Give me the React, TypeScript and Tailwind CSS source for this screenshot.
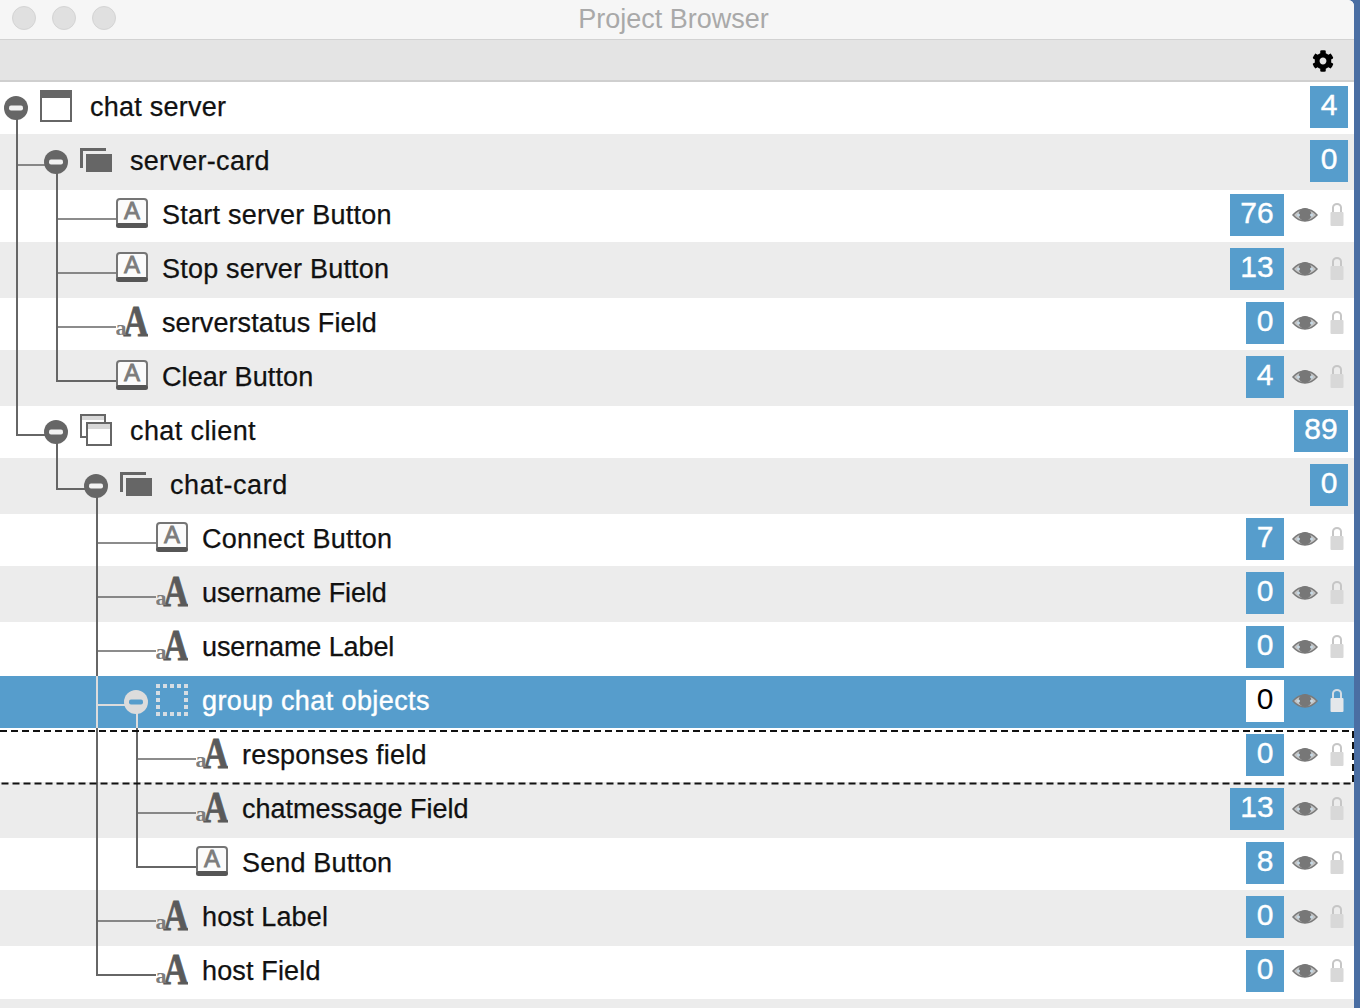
import { FaCog } from "react-icons/fa";

const GRAY = "#666666";

function WindowIcon() {
  return (
    <svg width="32" height="32" viewBox="0 0 32 32">
      <rect x="1" y="1" width="30" height="30" fill="#fff" stroke={GRAY} strokeWidth="2" />
      <rect x="0" y="0" width="32" height="8" fill={GRAY} />
    </svg>
  );
}

function CardIcon() {
  return (
    <svg width="32" height="24" viewBox="0 0 32 24">
      <path d="M0 0H26V3H3V20H0Z" fill={GRAY} />
      <rect x="6" y="6" width="26" height="18" fill={GRAY} />
    </svg>
  );
}

function StackIcon() {
  return (
    <svg width="32" height="32" viewBox="0 0 32 32">
      <rect x="1" y="1" width="24" height="22" fill="#fff" stroke={GRAY} strokeWidth="2" />
      <rect x="2" y="2" width="22" height="4" fill="#d8d8d8" />
      <rect x="7" y="9" width="24" height="22" fill="#fff" stroke={GRAY} strokeWidth="2" />
      <rect x="8" y="10" width="22" height="5" fill="#d8d8d8" />
    </svg>
  );
}

function ButtonIcon() {
  return (
    <svg width="32" height="30" viewBox="0 0 32 30">
      <rect x="1" y="1" width="30" height="27" rx="3" fill="#fbfbfb" stroke="#757575" strokeWidth="2" />
      <rect x="0" y="25" width="32" height="5" rx="2.500" fill="#565656" />
      <text
        x="16"
        y="21"
        textAnchor="middle"
        fontFamily="Liberation Sans, sans-serif"
        fontSize="24"
        fill="#7c7c7c"
        stroke="#7c7c7c"
        strokeWidth="0.800"
      >
        A
      </text>
    </svg>
  );
}

function FieldIcon() {
  return (
    <svg width="32" height="58" viewBox="0 -14 32 58">
      <text
        transform="translate(20 30) scale(0.8 1)"
        textAnchor="middle"
        fontFamily="Liberation Serif, serif"
        fontWeight="700"
        fontSize="44"
        fill="#5a5a5a"
        stroke="#5a5a5a"
        strokeWidth="0.800"
      >
        A
      </text>
      <text x="5" y="29" textAnchor="middle" fontFamily="Liberation Serif, serif" fontWeight="700" fontSize="22" fill="#7d7d7d">
        a
      </text>
    </svg>
  );
}

function GroupIcon() {
  const steps = [0, 7, 14, 21, 28];
  return (
    <svg width="32" height="32" viewBox="0 0 32 32" fill="#d6dde3">
      {steps.map((p) => (
        <g key={p}>
          <rect x={p} y={0} width="4" height="4" />
          <rect x={p} y={28} width="4" height="4" />
          <rect x={0} y={p} width="4" height="4" />
          <rect x={28} y={p} width="4" height="4" />
        </g>
      ))}
    </svg>
  );
}

function Eye() {
  return (
    <svg width="26" height="14" viewBox="0 0 26 14">
      <path d="M1 7C5 2.500 9 1 13 1s8 1.500 12 6c-4 4.500-8 6-12 6S5 11.500 1 7Z" fill="#c4c4c4" stroke="#7a7a7a" strokeWidth="1.500" />
      <circle cx="13" cy="6.500" r="6.500" fill="#777" />
      <circle cx="6.500" cy="7" r="1.500" fill="#c6d8e4" />
      <circle cx="19.500" cy="7" r="1.500" fill="#c6d8e4" />
    </svg>
  );
}

function Lock({ selected }: { selected: boolean }) {
  return (
    <svg width="14" height="23" viewBox="0 0 14 23">
      <path d="M3 10V4.500a4 3.500 0 0 1 8 0V10" fill="none" stroke={selected ? "#d5dde4" : "#c6c6c6"} strokeWidth="2" />
      <rect x="0.500" y="9" width="13" height="14" rx="1" fill={selected ? "#e4e7ea" : "#d8d8d8"} />
    </svg>
  );
}

type Kind = "window" | "card" | "stack" | "button" | "field" | "group";

const ICONS: Record<Kind, () => React.ReactElement> = {
  window: WindowIcon,
  card: CardIcon,
  stack: StackIcon,
  button: ButtonIcon,
  field: FieldIcon,
  group: GroupIcon,
};

type Row = { label: string; kind: Kind; depth: number; count: number; track: number; tools?: boolean; selected?: boolean };

const ROWS: Row[] = [
  { label: "chat server", kind: "window", depth: 0, count: 4, track: 0.25 },
  { label: "server-card", kind: "card", depth: 1, count: 0, track: 0.3 },
  { label: "Start server Button", kind: "button", depth: 2, count: 76, track: 0.25, tools: true },
  { label: "Stop server Button", kind: "button", depth: 2, count: 13, track: 0.2, tools: true },
  { label: "serverstatus Field", kind: "field", depth: 2, count: 0, track: 0.1, tools: true },
  { label: "Clear Button", kind: "button", depth: 2, count: 4, track: 0.1, tools: true },
  { label: "chat client", kind: "stack", depth: 1, count: 89, track: 0.4, tools: false },
  { label: "chat-card", kind: "card", depth: 3, count: 0, track: 0.6 },
  { label: "Connect Button", kind: "button", depth: 4, count: 7, track: 0.3, tools: true },
  { label: "username Field", kind: "field", depth: 4, count: 0, track: -0.1, tools: true },
  { label: "username Label", kind: "field", depth: 4, count: 0, track: -0.1, tools: true },
  { label: "group chat objects", kind: "group", depth: 5, count: 0, track: 0.4, tools: true, selected: true },
  { label: "responses field", kind: "field", depth: 6, count: 0, track: 0.2, tools: true },
  { label: "chatmessage Field", kind: "field", depth: 6, count: 13, track: 0, tools: true },
  { label: "Send Button", kind: "button", depth: 6, count: 8, track: 0.15, tools: true },
  { label: "host Label", kind: "field", depth: 4, count: 0, track: 0.15, tools: true },
  { label: "host Field", kind: "field", depth: 4, count: 0, track: 0.15, tools: true },
];

const ICON_LEFT = [40, 80, 116, 120, 156, 156, 196];
const TEXT_LEFT = [90, 130, 162, 170, 202, 202, 242];

function TreeRow({ row, index }: { row: Row; index: number }) {
  const Icon = ICONS[row.kind];
  const shape = row.selected
    ? "h-[54px] border-y border-y-white bg-[#569dcc] bg-clip-padding"
    : index % 2 === 0
      ? "h-[54px] bg-white"
      : "z-[1] -my-px h-[56px] bg-[#ececec]";
  const lifted = row.kind === "button" || row.kind === "field";
  return (
    <div className={`relative flex items-center ${shape}`}>
      <div
        className={`absolute top-1/2 flex h-[32px] w-[32px] items-center ${lifted ? "-translate-y-[19px]" : "-translate-y-[18px]"}`}
        style={{ left: ICON_LEFT[row.depth] }}
      >
        <Icon />
      </div>
      <span
        className={`relative top-[-1px] text-[27px] leading-none ${
          row.selected
            ? "text-white [-webkit-text-stroke:0.4px_#ffffff]"
            : "text-[#111111] [-webkit-text-stroke:0.25px_#111111]"
        }`}
        style={{ marginLeft: TEXT_LEFT[row.depth], letterSpacing: row.track }}
      >
        {row.label}
      </span>
      <div className="mb-[2px] ml-auto flex items-center pr-[6px]">
        <span
          className={`flex h-[42px] items-center justify-center pb-[5px] text-[30px] leading-none ${
            row.count > 9 ? "w-[54px]" : "w-[38px]"
          } ${
            row.selected
              ? "bg-white text-black"
              : "bg-[#569dcc] text-white [-webkit-text-stroke:0.4px_#ffffff]"
          }`}
        >
          {row.count}
        </span>
        {row.tools && (
          <div className="flex w-[64px] items-center gap-[12px] pl-[8px]">
            <Eye />
            <div className="-mt-[2px]">
              <Lock selected={!!row.selected} />
            </div>
          </div>
        )}
      </div>
    </div>
  );
}

function Minus({ x, y, selected }: { x: number; y: number; selected?: boolean }) {
  return (
    <g>
      <circle cx={x} cy={y} r="12" fill={selected ? "#dcdcdc" : GRAY} />
      <rect x={x - 7} y={y - 2.500} width="14" height="5" rx="2" fill={selected ? "#569dcc" : "#f2f2f2"} />
    </g>
  );
}

function TreeLines() {
  const verticals = [
    "M17 108V435H45",
    "M57 162V381H116",
    "M57 432V489H85",
    "M97 486V676",
    "M97 728V975H156",
    "M137 728V867H196",
  ];
  const branches = [165, 219, 273, 327].map((y, i) => `M${i === 0 ? 17 : 57} ${y}H${i === 0 ? 45 : 116}`);
  const low = [543, 597, 651, 921].map((y) => `M97 ${y}H156`);
  const inner = [759, 813].map((y) => `M137 ${y}H196`);
  return (
    <svg className="pointer-events-none absolute inset-0 z-[2]" width="1354" height="927" viewBox="0 81 1354 927">
      {verticals.map((d) => (
        <path key={d} d={d} fill="none" stroke={GRAY} strokeWidth="2" />
      ))}
      {[...branches, ...low, ...inner].map((d) => (
        <path key={d} d={d} fill="none" stroke={GRAY} strokeWidth="1.500" />
      ))}
      <path d="M97 676V728M97 705H125M137 702V728" fill="none" stroke="#dcdcdc" strokeWidth="2" />
      <Minus x={16} y={108} />
      <Minus x={56} y={162} />
      <Minus x={56} y={432} />
      <Minus x={96} y={486} />
      <Minus x={136} y={702} selected />
      <path d="M0 731H1353V783.500H0" fill="none" stroke="#111" strokeWidth="2" strokeDasharray="7 4" />
    </svg>
  );
}

export default function App() {
  return (
    <div className="flex h-[1008px] w-[1360px] overflow-hidden bg-[#4a6ea3] font-['Liberation_Sans',Arial,sans-serif]">
      <div className="flex h-full w-[1354px] flex-col overflow-hidden rounded-tr-[6px] bg-white">
        <header className="relative flex h-[40px] shrink-0 items-center justify-center border-b border-b-[#d2d2d2] bg-[#f6f6f6] pr-[7px]">
          <div className="absolute left-[12px] top-[6px] flex gap-[16px]">
            <span className="h-[24px] w-[24px] rounded-full border border-[#d4d4d4] bg-[#e0e0e0]" />
            <span className="h-[24px] w-[24px] rounded-full border border-[#d4d4d4] bg-[#e0e0e0]" />
            <span className="h-[24px] w-[24px] rounded-full border border-[#d4d4d4] bg-[#e0e0e0]" />
          </div>
          <span className="text-[27px] leading-none text-[#a9a9a9]">Project Browser</span>
        </header>
        <div className="relative z-[3] -mb-px flex h-[42px] shrink-0 items-center justify-end border-b-2 border-b-[#cfcfcf] bg-[#e4e4e4] pr-[20px] pt-[2px]">
          <FaCog className="h-[22px] w-[22px] text-black" />
        </div>
        <div className="relative flex-1 bg-[#ececec]">
          {ROWS.map((row, i) => (
            <TreeRow key={row.label} row={row} index={i} />
          ))}
          <TreeLines />
        </div>
      </div>
    </div>
  );
}
